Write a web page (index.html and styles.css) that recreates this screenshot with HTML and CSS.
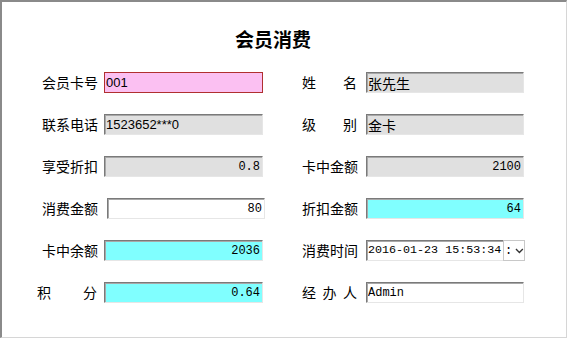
FILE: index.html
```html
<!DOCTYPE html>
<html lang="zh-CN">
<head>
    <meta charset="UTF-8">
    <meta name="viewport" content="width=device-width, initial-scale=1.0">
    <title>会员消费</title>
    <link rel="stylesheet" href="styles.css">
</head>
<body>

<div class="window">
    <h1 class="title">会员消费</h1>

    <div class="form">
        <div class="row">
            <label class="lbl">会员卡号</label>
            <input class="box box-pink txt-sans" type="text" value="001">
        </div>
        <div class="row">
            <label class="lbl lbl-spread"><span>姓</span><span>名</span></label>
            <input class="box box-gray txt-cjk" type="text" value="张先生" readonly>
        </div>

        <div class="row">
            <label class="lbl">联系电话</label>
            <input class="box box-gray txt-sans" type="text" value="1523652***0" readonly>
        </div>
        <div class="row">
            <label class="lbl lbl-spread"><span>级</span><span>别</span></label>
            <input class="box box-gray txt-cjk" type="text" value="金卡" readonly>
        </div>

        <div class="row">
            <label class="lbl">享受折扣</label>
            <input class="box box-gray num" type="text" value="0.8" readonly>
        </div>
        <div class="row">
            <label class="lbl">卡中金额</label>
            <input class="box box-gray num" type="text" value="2100" readonly>
        </div>

        <div class="row">
            <label class="lbl">消费金额</label>
            <input class="box box-white num box-shift" type="text" value="80">
        </div>
        <div class="row">
            <label class="lbl">折扣金额</label>
            <input class="box box-cyan num" type="text" value="64" readonly>
        </div>

        <div class="row">
            <label class="lbl">卡中余额</label>
            <input class="box box-cyan num" type="text" value="2036" readonly>
        </div>
        <div class="row">
            <label class="lbl">消费时间</label>
            <div class="box box-white date">
                <span class="date-text">2016-01-23 15:53:34</span>
                <span class="date-btn">:<svg width="9" height="6" viewBox="0 0 9 6"><path d="M1 1 L4.5 4.5 L8 1" fill="none" stroke="#333" stroke-width="1.4"/></svg></span>
            </div>
        </div>

        <div class="row">
            <label class="lbl lbl-spread lbl-wide"><span>积</span><span>分</span></label>
            <input class="box box-cyan num" type="text" value="0.64" readonly>
        </div>
        <div class="row">
            <label class="lbl lbl-spread"><span>经</span><span>办</span><span>人</span></label>
            <input class="box box-white mono" type="text" value="Admin">
        </div>
    </div>
</div>

</body>
</html>
```

FILE: styles.css
```css
body {
    margin: 0;
    padding: 0;
    background-color: #ffffff;
    font-family: "Noto Sans CJK SC", sans-serif;
    color: #000000;
}

.window {
    box-sizing: border-box;
    width: 567px;
    height: 338px;
    background-color: #ffffff;
    border-top: 2px solid #8a8a8a;
    border-left: 2px solid #8a8a8a;
    border-right: 1px solid #d6d6d6;
    border-bottom: 1px solid #d6d6d6;
}

.title {
    margin: 27px 0 0 233px;
    font-size: 19px;
    line-height: 20px;
    font-weight: bold;
}

.form {
    display: grid;
    grid-template-columns: 221px 222px;
    grid-auto-rows: 21px;
    column-gap: 39px;
    row-gap: 21px;
    margin: 23px 0 0 40px;
}

.row {
    display: flex;
    align-items: center;
}

.lbl {
    flex: none;
    width: 55px;
    margin-right: 7px;
    font-size: 14px;
    line-height: 21px;
    white-space: nowrap;
}

.row:nth-child(even) .lbl {
    margin-right: 9px;
}

.lbl-spread {
    display: flex;
    justify-content: space-between;
}

.lbl-wide {
    width: 60px;
    margin-left: -5px;
}

/* text boxes */
.box {
    box-sizing: border-box;
    flex: none;
    width: 159px;
    height: 21px;
    margin: 0;
    padding: 0 2px 0 1px;
    border: 1px solid;
    border-color: #7a7a7a #e6e6e6 #e6e6e6 #7a7a7a;
    box-shadow: inset 1px 1px 0 #a8a8a8;
    outline: none;
    color: #000000;
}

.row:nth-child(even) .box {
    width: 158px;
}

.box-pink {
    background-color: #fbc0f2;
    border-color: #b03030;
    box-shadow: none;
}

.box-gray {
    background-color: #e0e0e0;
}

.box-cyan {
    background-color: #80ffff;
}

.box-white {
    background-color: #ffffff;
}

.box-shift {
    margin-left: 3px;
    width: 158px;
}

.txt-sans {
    font-family: "Liberation Sans", Arial, sans-serif;
    font-size: 13px;
}

.txt-cjk {
    font-family: "Noto Sans CJK SC", sans-serif;
    font-size: 14px;
}

.num, .mono {
    font-family: "Liberation Mono", monospace;
    font-size: 12px;
}

.num {
    text-align: right;
}

/* date picker */
.date {
    display: flex;
    align-items: stretch;
    padding: 0;
}

.date-text {
    flex: none;
    width: 135px;
    padding-left: 1px;
    font-family: "Liberation Mono", monospace;
    font-size: 11.7px;
    line-height: 19px;
    white-space: nowrap;
}

.date-btn {
    display: flex;
    align-items: center;
    gap: 3px;
    flex: none;
    box-sizing: border-box;
    width: 22px;
    margin: -1px -1px -1px 0;
    padding-left: 1px;
    border: 1px solid #c8c8c8;
    background-color: #ffffff;
    font-family: "Liberation Mono", monospace;
    font-size: 12px;
}
```
